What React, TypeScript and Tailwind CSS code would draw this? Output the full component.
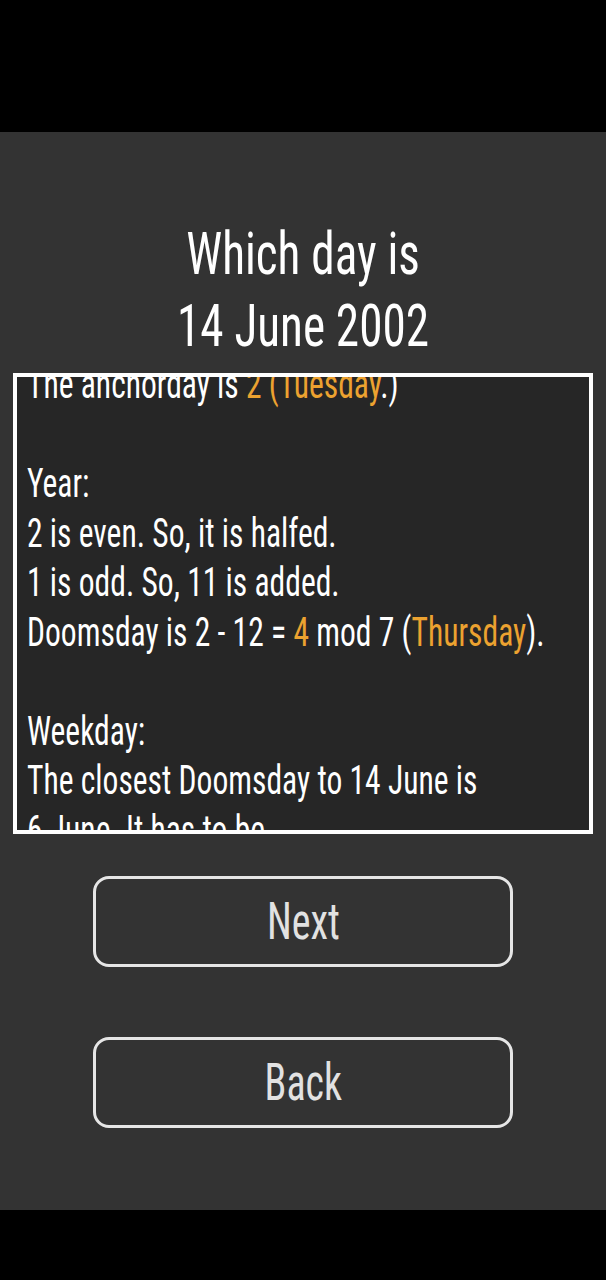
const orange = 'text-[#eca230]';

function Line({ children }: { children?: React.ReactNode }) {
  return <div className="h-[49.5px] leading-[49.5px]">{children ?? '\u00a0'}</div>;
}

export default function App() {
  return (
    <div className="flex min-h-[1280px] flex-col bg-black font-['Roboto',sans-serif] [font-stretch:75%]">
      {/* status bar area */}
      <div className="h-[132px] bg-black" />

      <main className="flex h-[1078px] flex-col items-center bg-[#333333]">
        {/* title */}
        <div className="mt-[86px] w-full origin-center scale-x-[0.8] text-center text-[59px] leading-[72px] text-white">
          <div>Which day is</div>
          <div>14 June 2002</div>
        </div>

        {/* explanation panel, scrolled a little */}
        <div className="mt-[11px] h-[461px] w-[580px] overflow-hidden border-4 border-white bg-[#262626] pl-[10px]">
          <div className="-mt-[17px] origin-left scale-x-[0.77] whitespace-nowrap text-[41px] text-white">
            <Line>
              The anchorday is <span className={orange}>2 (Tuesday</span>.)
            </Line>
            <Line />
            <Line>Year:</Line>
            <Line>2 is even. So, it is halfed.</Line>
            <Line>1 is odd. So, 11 is added.</Line>
            <Line>
              Doomsday is 2 - 12 = <span className={orange}>4</span> mod 7 (
              <span className={orange}>Thursday</span>).
            </Line>
            <Line />
            <Line>Weekday:</Line>
            <Line>The closest Doomsday to 14 June is</Line>
            <Line>6 June. It has to be</Line>
          </div>
        </div>

        <div className="mt-[42px] flex flex-col gap-[70px]">
          {['Next', 'Back'].map((label) => (
            <button
              key={label}
              className="flex h-[91px] w-[420px] items-center justify-center rounded-[16px] border-[3px] border-[#e6e6e6] bg-transparent"
            >
              <span className="block origin-center scale-x-[0.77] text-[52px] leading-none text-[#e2e2e2]">
                {label}
              </span>
            </button>
          ))}
        </div>
      </main>

      <div className="h-[70px] bg-black" />
    </div>
  );
}
